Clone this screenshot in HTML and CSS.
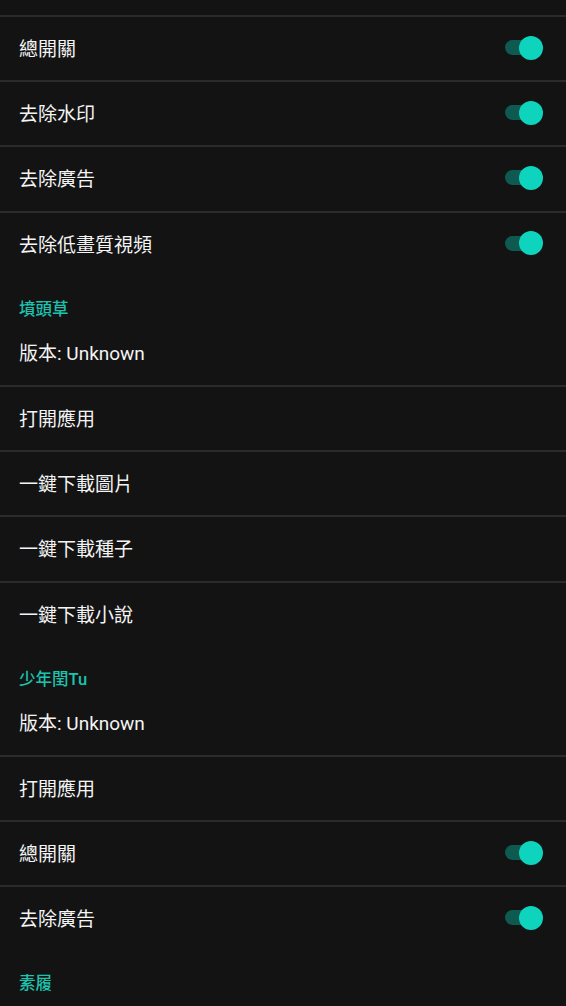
FILE: index.html
```html
<!DOCTYPE html>
<html lang="zh-Hant">
  <head>
    <meta charset="UTF-8" />
    <meta name="viewport" content="width=device-width, initial-scale=1.0" />
    <title>設置</title>
    <link rel="stylesheet" href="styles.css">
  </head>
  <body>
    <div class="top-spacer"></div>

    <!-- 第一組 -->
    <div class="item"><span>總開關</span><span class="switch on"></span></div>
    <div class="item"><span>去除水印</span><span class="switch on"></span></div>
    <div class="item"><span>去除廣告</span><span class="switch on"></span></div>
    <div class="item"><span>去除低畫質視頻</span><span class="switch on"></span></div>

    <!-- 墳頭草 -->
    <h2 class="category">墳頭草</h2>
    <div class="item first"><span>版本: Unknown</span></div>
    <div class="item"><span>打開應用</span></div>
    <div class="item"><span>一鍵下載圖片</span></div>
    <div class="item"><span>一鍵下載種子</span></div>
    <div class="item"><span>一鍵下載小說</span></div>

    <!-- 少年閏Tu -->
    <h2 class="category">少年閏Tu</h2>
    <div class="item first"><span>版本: Unknown</span></div>
    <div class="item"><span>打開應用</span></div>
    <div class="item"><span>總開關</span><span class="switch on"></span></div>
    <div class="item"><span>去除廣告</span><span class="switch on"></span></div>

    <!-- 素履 -->
    <h2 class="category">素履</h2>
  </body>
</html>
```
FILE: styles.css
```css
body {
  margin: 0;
  padding: 0;
  background-color: #131313;
  color: #f4f4f4;
  font-family: Roboto, "Noto Sans CJK TC", sans-serif;
  overflow: hidden;
}
.top-spacer {
  height: 15px;
}
.item {
  box-sizing: border-box;
  height: 65.2px;
  border-top: 2px solid #2b2b2b;
  padding: 0 27px 2px 19px;
  display: flex;
  justify-content: space-between;
  align-items: center;
  font-size: 19px;
}
.item.first {
  border-top: none;
}
.category {
  margin: 0;
  height: 44px;
  box-sizing: border-box;
  padding: 24px 0 0 19px;
  font-size: 16.5px;
  line-height: 20px;
  font-weight: 500;
  color: #1cc3ae;
}
.switch {
  position: relative;
  width: 34px;
  height: 15px;
  border-radius: 8px;
  background-color: #0e5a51;
}
.switch::after {
  content: "";
  position: absolute;
  right: -4px;
  top: -4.5px;
  width: 24px;
  height: 24px;
  border-radius: 50%;
  background-color: #0fd4bd;
}
```
